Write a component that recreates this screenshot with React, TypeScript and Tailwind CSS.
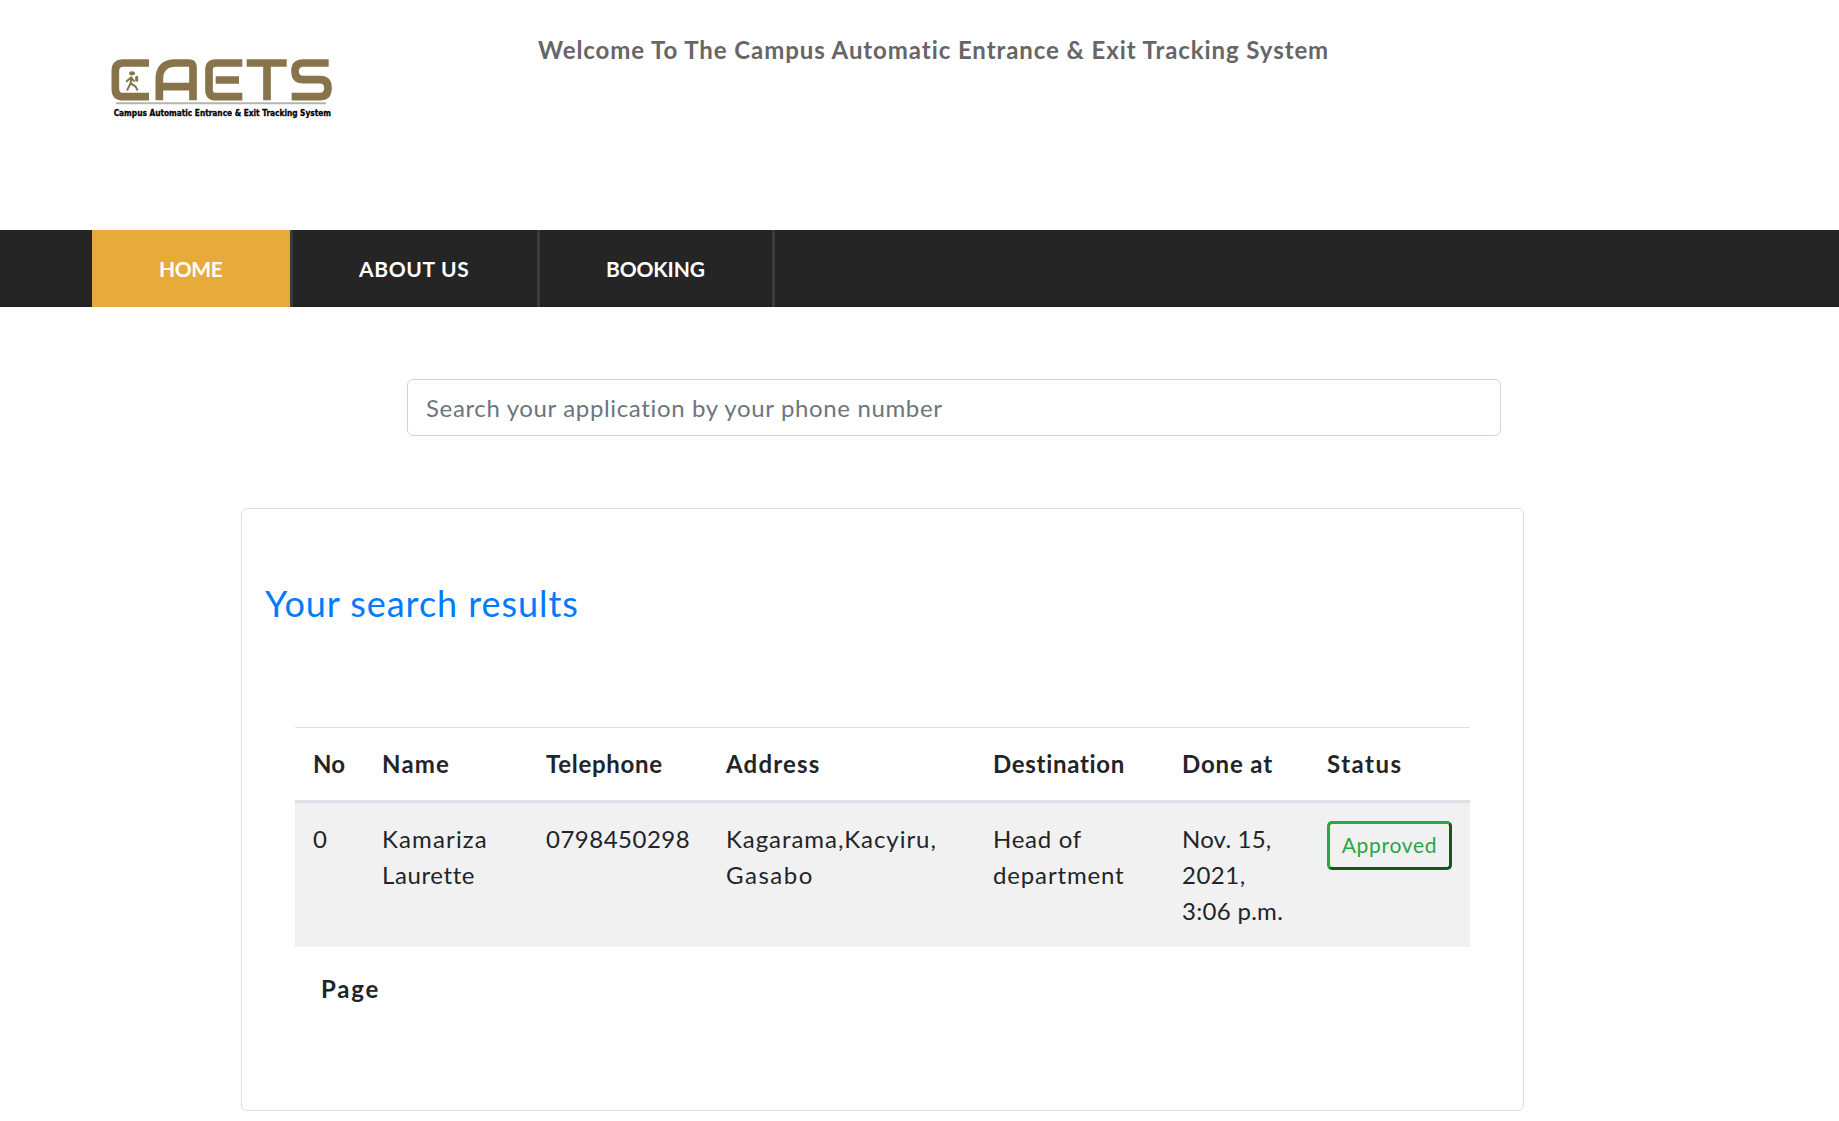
import type { ReactNode } from 'react';

function Logo() {
  return (
    <svg className="block h-[90px] w-[270px]" viewBox="0 0 810 270" fill="none" role="img" aria-label="CAETS">
      <g stroke="#87744a" strokeWidth="23">
        <path d="M177 69H100Q76 69 76 93V146Q76 170 100 170H177" />
        <path d="M208 181V118Q208 69 257 69H296Q309 69 309 82V181M208 140H309" />
        <path d="M457 69H378Q357 69 357 90V149Q357 170 378 170H457M377 120H447" />
        <path d="M470 69H590M531 69V181" />
        <path d="M716 69H640Q615 69 615 94Q615 119 640 119H690Q714 119 714 144Q714 170 690 170H605" />
      </g>
      <g stroke="#87744a" strokeWidth="6" strokeLinecap="round" strokeLinejoin="round">
        <ellipse cx="126" cy="100" rx="6" ry="3" fill="#87744a" />
        <path d="M124 112L110 124M124 112L122 130L112 149M123 130L136 139L142 149M124 113L132 123" />
        <path d="M140 112V121" strokeWidth="9" />
      </g>
      <path d="M78 190H708" stroke="#b5b5b0" strokeWidth="6" />
      <text x="71" y="227" textLength="652" lengthAdjust="spacingAndGlyphs" fill="#000" stroke="#000" strokeWidth="0.8" className="font-['DejaVu_Sans'] text-[24px] font-bold">
        Campus Automatic Entrance &amp; Exit Tracking System
      </text>
    </svg>
  );
}

function NavItem({ className, children }: { className: string; children: ReactNode }) {
  return (
    <a href="#" className={`flex h-full items-center border-r-[3px] border-[#3b3b3b] text-[21px] font-bold text-white ${className}`}>
      {children}
    </a>
  );
}

const columns = [
  { label: 'No', width: 'w-[69px]', tracking: 'tracking-[0.2px]' },
  { label: 'Name', width: 'w-[164px]', tracking: 'tracking-[1.2px]' },
  { label: 'Telephone', width: 'w-[180px]', tracking: 'tracking-[0.7px]' },
  { label: 'Address', width: 'w-[267px]', tracking: 'tracking-[1.2px]' },
  { label: 'Destination', width: 'w-[189px]', tracking: 'tracking-[0.7px]' },
  { label: 'Done at', width: 'w-[145px]', tracking: 'tracking-[0.85px]' },
  { label: 'Status', width: 'w-[161px]', tracking: 'tracking-[1.5px]' },
];

const cells = [
  [{ text: '0', tracking: '' }],
  [{ text: 'Kamariza', tracking: 'tracking-[1.15px]' }, { text: 'Laurette', tracking: 'tracking-[0.6px]' }],
  [{ text: '0798450298', tracking: 'tracking-[0.5px]' }],
  [{ text: 'Kagarama,Kacyiru,', tracking: 'tracking-[0.95px]' }, { text: 'Gasabo', tracking: 'tracking-[1.5px]' }],
  [{ text: 'Head of', tracking: 'tracking-[0.7px]' }, { text: 'department', tracking: 'tracking-[0.85px]' }],
  [
    { text: 'Nov. 15,', tracking: 'tracking-[0.2px]' },
    { text: '2021,', tracking: 'tracking-[0.5px]' },
    { text: '3:06 p.m.', tracking: 'tracking-[0.3px]' },
  ],
];

export default function App() {
  return (
    <div className="h-[1121px] overflow-hidden bg-white font-['Lato',sans-serif] text-[24px] leading-[36px] text-[#212529]">
      <header className="flex h-[230px] items-start pl-[90px]">
        <div className="pt-10">
          <Logo />
        </div>
        <h1 className="ml-[178px] mt-[32px] whitespace-nowrap font-bold tracking-[0.92px] text-[#666]">
          Welcome To The Campus Automatic Entrance &amp; Exit Tracking System
        </h1>
      </header>

      <nav className="flex h-[77px] bg-[#252525] pl-[92px] shadow-[inset_0_-2px_0_#1f1f1f]">
        <NavItem className="w-[201px] bg-[#e7ab3c] pl-[67px] tracking-[-0.4px]">HOME</NavItem>
        <NavItem className="w-[247px] pl-[66px] tracking-[0.65px]">ABOUT US</NavItem>
        <NavItem className="w-[235px] pl-[66px] tracking-[-0.15px]">BOOKING</NavItem>
      </nav>

      <input
        className="ml-[407px] mt-[72px] block h-[57px] w-[1094px] rounded-[6px] border border-[#ced4da] px-[18px] tracking-[0.64px] placeholder:text-[#6c757d]"
        placeholder="Search your application by your phone number"
      />

      <section className="ml-[241px] mt-[72px] h-[603px] w-[1283px] rounded-[6px] border border-[#dfdfdf] px-[23px]">
        <h2 className="mt-[72px] text-[36px] leading-[44px] tracking-[0.94px] text-[#007bff]">Your search results</h2>
        <table className="ml-[30px] mt-[102px] w-[1175px] table-fixed border-separate border-spacing-0 text-left">
          <thead>
            <tr>
              {columns.map((c) => (
                <th
                  key={c.label}
                  className={`h-[76px] border-b-[3px] border-t border-b-[#dee2e6] border-t-[#dee2e6] pb-0 pl-[18px] font-bold ${c.width} ${c.tracking}`}
                >
                  {c.label}
                </th>
              ))}
            </tr>
          </thead>
          <tbody>
            <tr className="h-[144px] bg-[#f1f1f1] align-top">
              {cells.map((lines, i) => (
                <td key={i} className="whitespace-nowrap pl-[18px] pt-[18px]">
                  {lines.map((l) => (
                    <div key={l.text} className={l.tracking}>
                      {l.text}
                    </div>
                  ))}
                </td>
              ))}
              <td className="pl-[18px] pt-[18px]">
                <button className="block h-[49px] w-[125px] rounded-[5px] border-[3px] border-b-[#145523] border-l-[#28a745] border-r-[#145523] border-t-[#28a745] pb-[2px] text-[21px] leading-[32px] tracking-[0.7px] text-[#28a745]">
                  Approved
                </button>
              </td>
            </tr>
          </tbody>
        </table>
        <div className="ml-[56px] mt-[24px] font-bold tracking-[1.8px]">Page</div>
      </section>
    </div>
  );
}
